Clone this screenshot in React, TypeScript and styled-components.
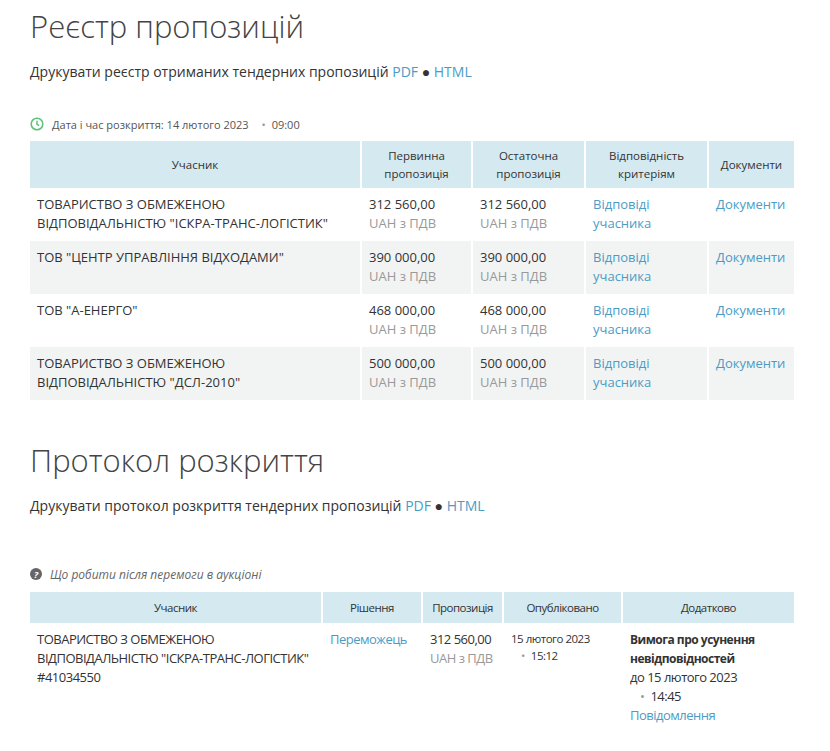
import React from "react";
import styled, { createGlobalStyle } from "styled-components";

const G = createGlobalStyle`
  body { margin: 0; background: #fff; font-family: "Open Sans", sans-serif; color: #333; }
`;
const Page = styled.div`padding: 4px 36px 20px 30px;`;
const Title = styled.h1<{ $mt?: number }>`font-weight: 300; font-size: 31px; margin: ${p => p.$mt || 0}px 0 0; line-height: 44px; color: #444;`;
const Sub = styled.p<{ $mt: number }>`font-size: 14px; margin: ${p => p.$mt}px 0 0; line-height: 20px; color: #333;`;
const A = styled.a`color: #4b9cc5; text-decoration: none;`;
const Meta = styled.div`display: flex; align-items: center; gap: 8px; font-size: 11px; color: #555; margin-top: 34px; height: 16px;`;
const Note = styled.div`display: flex; align-items: center; gap: 8px; font-size: 12px; font-style: italic; color: #666; margin-top: 50px; height: 16px;`;
const Table = styled.table<{ $mt: number; $narrow?: boolean }>`
  width: 100%; border-collapse: collapse; table-layout: fixed; margin-top: ${p => p.$mt}px;
  font-size: 13px; ${p => p.$narrow ? "letter-spacing: -0.5px;" : ""}
`;
const Th = styled.th<{ $w: number; $h: number }>`
  width: ${p => p.$w}px; height: ${p => p.$h}px; background: #d5e9f1; font-weight: 400; font-size: 11.5px;
  color: #333; line-height: 18px; border-left: 2px solid #fff; vertical-align: middle; padding: 0 4px; box-sizing: border-box;
  &:first-child { border-left: none; }
`;
const Tr = styled.tr<{ $alt?: boolean }>`background: ${p => p.$alt ? "#f2f4f4" : "#fff"};`;
const Td = styled.td`vertical-align: top; padding: 7px 7px 8px 7px; line-height: 19px; border-left: 2px solid #fff;
  &:first-child { border-left: none; } height: 38px;`;
const Grey = styled.div`color: #999;`;
const Bold = styled.div`font-weight: 700; font-size: 12px;`;
const Dot = styled.span`color: #999; margin: 0 6px 0 10px;`;
const Small = styled.div`font-size: 11.5px; line-height: 17px;`;

const rows = [
  ['ТОВАРИСТВО З ОБМЕЖЕНОЮ ВІДПОВІДАЛЬНІСТЮ "ІСКРА-ТРАНС-ЛОГІСТИК"', "312 560,00"],
  ['ТОВ "ЦЕНТР УПРАВЛІННЯ ВІДХОДАМИ"', "390 000,00"],
  ['ТОВ "А-ЕНЕРГО"', "468 000,00"],
  ['ТОВАРИСТВО З ОБМЕЖЕНОЮ ВІДПОВІДАЛЬНІСТЮ "ДСЛ-2010"', "500 000,00"],
];

export default function App() {
  return (
    <Page>
      <G />
      <Title>Реєстр пропозицій</Title>
      <Sub $mt={14}>Друкувати реєстр отриманих тендерних пропозицій <A>PDF</A> ● <A>HTML</A></Sub>
      <Meta>
        <svg width="14" height="14" viewBox="0 0 14 14"><circle cx="7" cy="7" r="5.8" fill="none" stroke="#5cc47a" strokeWidth="1.6"/><path d="M7 3.8V7.3L9.2 8.6" fill="none" stroke="#5cc47a" strokeWidth="1.5"/></svg>
        <span>Дата і час розкриття: 14 лютого 2023 <Dot>•</Dot>09:00</span>
      </Meta>
      <Table $mt={9}>
        <thead><tr>
          <Th $w={331} $h={47}>Учасник</Th>
          <Th $w={111} $h={47}>Первинна<br/>пропозиція</Th>
          <Th $w={113} $h={47}>Остаточна<br/>пропозиція</Th>
          <Th $w={123} $h={47}>Відповідність<br/>критеріям</Th>
          <Th $w={86} $h={47}>Документи</Th>
        </tr></thead>
        <tbody>
          {rows.map((r, i) => (
            <Tr key={i} $alt={i % 2 === 1}>
              <Td>{r[0]}</Td>
              <Td>{r[1]}<Grey>UAH з ПДВ</Grey></Td>
              <Td>{r[1]}<Grey>UAH з ПДВ</Grey></Td>
              <Td><A>Відповіді учасника</A></Td>
              <Td><A>Документи</A></Td>
            </Tr>
          ))}
        </tbody>
      </Table>
      <Title $mt={38}>Протокол розкриття</Title>
      <Sub $mt={14}>Друкувати протокол розкриття тендерних пропозицій <A>PDF</A> ● <A>HTML</A></Sub>
      <Note>
        <svg width="12" height="12" viewBox="0 0 12 12"><circle cx="6" cy="6" r="6" fill="#666"/><text x="6" y="9.5" fontSize="9" fontWeight="700" fill="#fff" textAnchor="middle" fontFamily="Open Sans">?</text></svg>
        <span>Що робити після перемоги в аукціоні</span>
      </Note>
      <Table $mt={10} $narrow>
        <thead><tr>
          <Th $w={292} $h={31}>Учасник</Th>
          <Th $w={100} $h={31}>Рішення</Th>
          <Th $w={81} $h={31}>Пропозиція</Th>
          <Th $w={119} $h={31}>Опубліковано</Th>
          <Th $w={172} $h={31}>Додатково</Th>
        </tr></thead>
        <tbody>
          <Tr>
            <Td>ТОВАРИСТВО З ОБМЕЖЕНОЮ ВІДПОВІДАЛЬНІСТЮ "ІСКРА-ТРАНС-ЛОГІСТИК"<br/>#41034550</Td>
            <Td><A>Переможець</A></Td>
            <Td>312 560,00<Grey>UAH з ПДВ</Grey></Td>
            <Td><Small>15 лютого 2023<div><Dot>•</Dot>15:12</div></Small></Td>
            <Td><Bold>Вимога про усунення невідповідностей</Bold>до 15 лютого 2023<div><Dot>•</Dot>14:45</div><A>Повідомлення</A></Td>
          </Tr>
        </tbody>
      </Table>
    </Page>
  );
}
